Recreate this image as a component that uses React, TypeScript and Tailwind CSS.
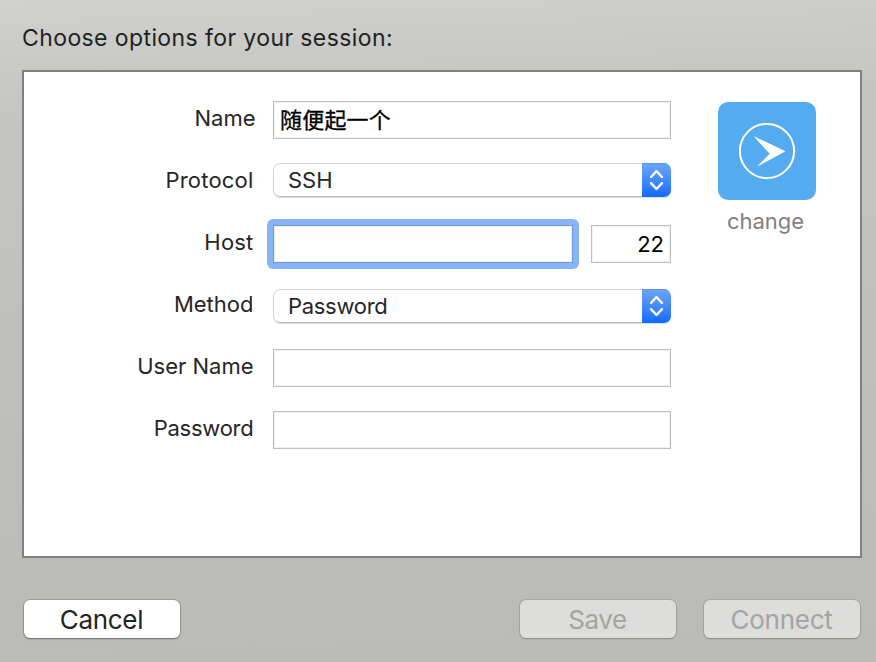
import type { ReactNode } from "react";

const field =
  "h-[38px] border border-[#bebebe] bg-white shadow-[inset_0_0_0_1px_#f1f1f1] outline-none text-black";

function Row({ label, labelClass, children }: { label: string; labelClass: string; children?: ReactNode }) {
  return (
    <div className="flex h-[38px]">
      <div className="flex w-[249px] shrink-0 justify-end pr-[19.5px]">
        <span className={`h-[34px] whitespace-nowrap text-[22px] leading-[34px] text-[#262626] ${labelClass}`}>{label}</span>
      </div>
      {children}
    </div>
  );
}

function Select({ value, className, textClass }: { value: string; className?: string; textClass: string }) {
  return (
    <div
      className={`flex h-[34px] w-[398px] overflow-hidden rounded-[7px] bg-white shadow-[0_1px_1px_rgba(0,0,0,0.14)] ${className ?? ""}`}
    >
      <div className="flex-1 rounded-l-[7px] border border-r-0 border-[#d4d4d4] border-b-[#bcbcbc] pl-[14px]">
        <span className={`block text-[22px] leading-[33px] text-[#262626] ${textClass}`}>{value}</span>
      </div>
      <div className="flex w-[29px] items-center justify-center bg-linear-to-b from-[#6ba5f8] to-[#106aff] shadow-[inset_0_1px_0_#5b93e6]">
        <svg width="29" height="34" viewBox="0 0 29 34" fill="none" stroke="white" strokeWidth="2.4" strokeLinecap="round" strokeLinejoin="round">
          <path d="M9 14 14.5 8.2 20 14M9 20.2 14.5 26 20 20.2" />
        </svg>
      </div>
    </div>
  );
}

function Button({ label, disabled, className }: { label: string; disabled?: boolean; className: string }) {
  return (
    <button
      disabled={disabled}
      className={`h-[38px] w-[156px] rounded-[6px] pt-px pr-px text-center text-[26px] leading-[38px] whitespace-nowrap ${
        disabled
          ? "bg-[#dddddb] text-[#a4a4a2] shadow-[0_0_0_1px_rgba(0,0,0,0.1),0_1px_2px_rgba(0,0,0,0.16)]"
          : "bg-white text-[#232323] shadow-[0_0_0_1px_rgba(0,0,0,0.15),0_1px_2px_rgba(0,0,0,0.32)]"
      } ${className}`}
    >
      {label}
    </button>
  );
}

export default function App() {
  return (
    <div className="h-[662px] w-[876px] overflow-hidden bg-[linear-gradient(178deg,#d0d1ce_0%,#c5c6c2_16%,#bfc0bb_50%,#babbb6_100%)] font-['Inter','Noto_Sans_CJK_SC',sans-serif]">
      <h1 className="h-[70px] pt-[22px] pl-[22px] text-[23px] leading-[32px] font-normal tracking-[0.4px] text-[#222]">
        Choose options for your session:
      </h1>
      <main className="ml-[22px] flex h-[488px] w-[840px] border-2 border-[#808080] bg-white pt-[29px]">
        <form className="flex w-[647px] flex-col gap-[24px]">
          <Row label="Name" labelClass="-mr-[2px] tracking-[0px]">
            <input className={`${field} w-[398px] px-[6px] pb-[4px] text-[22px] tracking-[0.2px] [-webkit-text-stroke:0.3px_black]`} defaultValue="随便起一个" />
          </Row>
          <Row label="Protocol" labelClass="tracking-[0.2px]">
            <Select value="SSH" textClass="tracking-[0px]" />
          </Row>
          <Row label="Host" labelClass="tracking-[0.2px]">
            <div className="-m-[6px] shrink-0 rounded-[6px] bg-[#8ab4f8] p-[6px]">
              <input className="block h-[38px] w-[300px] border border-[#6d98dc] bg-white shadow-[inset_0_0_0_1px_#f1f1f1] outline-none" />
            </div>
            <input className={`${field} ml-[18px] w-[80px] shrink-0 pr-[6px] text-right text-[22px]`} defaultValue="22" />
          </Row>
          <Row label="Method" labelClass="tracking-[0px]">
            <Select value="Password" className="mt-[2px]" textClass="tracking-[-0.3px]" />
          </Row>
          <Row label="User Name" labelClass="tracking-[0px]">
            <input className={`${field} w-[398px]`} />
          </Row>
          <Row label="Password" labelClass="tracking-[-0.25px]">
            <input className={`${field} w-[398px]`} />
          </Row>
        </form>
        <aside className="mt-px ml-[47px] flex w-[98px] flex-col items-center">
          <svg width="98" height="98" viewBox="0 0 98 98">
            <rect width="98" height="98" rx="10" fill="#54abf0" />
            <circle cx="49" cy="49" r="27.1" fill="none" stroke="white" strokeWidth="2" />
            <path d="M35.4 34 67.5 49.3 38.8 64.8 51.7 51.8Z" fill="white" />
          </svg>
          <span className="-ml-[3px] mt-[5px] text-[22px] leading-[32px] text-[#808080]">change</span>
        </aside>
      </main>
      <footer className="mt-[42px] ml-[24px] flex w-[836px]">
        <Button label="Cancel" className="mr-auto tracking-[-0.3px]" />
        <Button label="Save" disabled className="mr-[28px] tracking-[-0.4px]" />
        <Button label="Connect" disabled className="tracking-[-0.25px]" />
      </footer>
    </div>
  );
}
